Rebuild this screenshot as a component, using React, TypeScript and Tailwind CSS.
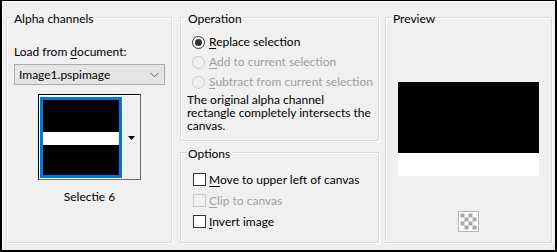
import React from "react";

const font = { fontFamily: 'Lato, "Noto Sans", sans-serif' };

function Group({
  title,
  className,
  children,
}: {
  title: string;
  className: string;
  children: React.ReactNode;
}) {
  return (
    <div
      className={`relative border border-[#dcdcdc] shadow-[inset_1px_1px_0_#fff,1px_1px_0_#fff] ${className}`}
    >
      <div className="absolute left-[6px] top-[-7px] whitespace-nowrap bg-[#f0f0f0] px-[1px] text-[12px] leading-4 text-black">
        {title}
      </div>
      {children}
    </div>
  );
}

function Radio({ checked, disabled, children }: { checked?: boolean; disabled?: boolean; children: React.ReactNode }) {
  return (
    <div className="flex h-5 items-center">
      <div
        className={`flex h-[13px] w-[13px] shrink-0 items-center justify-center rounded-full border ${
          disabled ? "border-[#cccccc]" : "border-[#333333] bg-white"
        }`}
      >
        {checked && <div className="h-[7px] w-[7px] rounded-full bg-[#333333]" />}
      </div>
      <span className={`ml-[4px] whitespace-nowrap text-[12px] leading-4 ${disabled ? "text-[#a0a0a0]" : "text-black"}`}>
        {children}
      </span>
    </div>
  );
}

function Check({ disabled, children }: { disabled?: boolean; children: React.ReactNode }) {
  return (
    <div className="flex h-[21px] items-center">
      <div className={`h-[13px] w-[13px] shrink-0 border ${disabled ? "border-[#cccccc]" : "border-[#333333] bg-white"}`} />
      <span className={`ml-[3px] whitespace-nowrap text-[12px] leading-4 ${disabled ? "text-[#a0a0a0]" : "text-black"}`}>
        {children}
      </span>
    </div>
  );
}

const U = ({ children }: { children: React.ReactNode }) => (
  <span className="underline underline-offset-[2px]">{children}</span>
);

export default function App() {
  return (
    <div className="h-[252px] w-[557px] border-b-2 border-l-2 border-r-2 border-t border-black bg-[#f0f0f0]" style={font}>
      <div className="flex h-full w-full border-l border-t border-white pl-[3px] pt-[15px]">
        {/* Alpha channels */}
        <Group title="Alpha channels" className="h-[226px] w-[166px]">
          <div className="flex flex-col pl-[7px] pt-[26px]">
            <div className="whitespace-nowrap text-[12px] leading-4 text-black">
              Load from <U>d</U>ocument:
            </div>
            <div className="mt-[4px] flex h-[21px] w-[151px] items-center justify-between border border-[#adadad] bg-[#e5e5e5] pl-[4px] pr-[5px] text-[12px] leading-4 text-black">
              <span>Image1.pspimage</span>
              <svg width="9" height="6" viewBox="0 0 9 6">
                <path d="M0.5 0.8 L4.5 4.8 L8.5 0.8" fill="none" stroke="#606060" strokeWidth="1" />
              </svg>
            </div>
            <div className="ml-[24px] mt-[9px] flex h-[86px] w-[103px] border-b border-l border-r border-t border-b-[#6a6a6a] border-l-black border-r-[#6a6a6a] border-t-black bg-white">
              <div className="pb-[1px] pl-[1px] pt-[2px]">
                <div className="flex h-[81px] w-[82px] flex-col border-[3px] border-[#0078d7] bg-black">
                  <div className="h-[32px]" />
                  <div className="h-[13px] bg-white" />
                </div>
              </div>
              <div className="flex flex-1 items-center justify-center border-l border-t border-white bg-[#f0f0f0]">
                <svg width="7" height="4" viewBox="0 0 7 4">
                  <path d="M0 0 H7 L3.5 4 Z" fill="#000" />
                </svg>
              </div>
            </div>
            <div className="ml-[24px] mt-[9px] w-[103px] text-center text-[12px] leading-4 text-black">Selectie 6</div>
          </div>
        </Group>

        {/* Middle column */}
        <div className="ml-[8px] flex w-[199px] flex-col">
          <Group title="Operation" className="h-[124px] w-[199px]">
            <div className="flex flex-col pl-[6px] pt-[14px]">
              <div className="pl-[5px]">
                <Radio checked>
                  <U>R</U>eplace selection
                </Radio>
                <Radio disabled>
                  <U>A</U>dd to current selection
                </Radio>
                <Radio disabled>
                  <U>S</U>ubtract from current selection
                </Radio>
              </div>
              <div className="mt-[1px] whitespace-nowrap text-[12px] leading-[13px] text-black">
                The original alpha channel
                <br />
                rectangle completely intersects the
                <br />
                canvas.
              </div>
            </div>
          </Group>
          <Group title="Options" className="mt-[11px] h-[91px] w-[199px]">
            <div className="flex flex-col pl-[12px] pt-[16px]">
              <Check>
                <U>M</U>ove to upper left of canvas
              </Check>
              <Check disabled>
                <U>C</U>lip to canvas
              </Check>
              <Check>
                <U>I</U>nvert image
              </Check>
            </div>
          </Group>
        </div>

        {/* Preview */}
        <Group title="Preview" className="ml-[6px] h-[226px] w-[167px]">
          <div className="flex flex-col items-center pt-[64px]">
            <div className="w-[141px]">
              <div className="h-[71px] bg-black" />
              <div className="h-[23px] bg-white" />
            </div>
            <svg className="mt-[35px]" width="21" height="21" viewBox="0 0 21 21">
              <rect x="0.5" y="0.5" width="20" height="20" fill="#ffffff" stroke="#b4b4b4" />
              {[0, 1, 2, 3].map((r) =>
                [0, 1, 2, 3].map((c) =>
                  (r + c) % 2 === 0 ? (
                    <rect key={`${r}-${c}`} x={2.5 + c * 4} y={2.5 + r * 4} width="4" height="4" fill="#a6a6a6" />
                  ) : null
                )
              )}
            </svg>
          </div>
        </Group>
      </div>
    </div>
  );
}
